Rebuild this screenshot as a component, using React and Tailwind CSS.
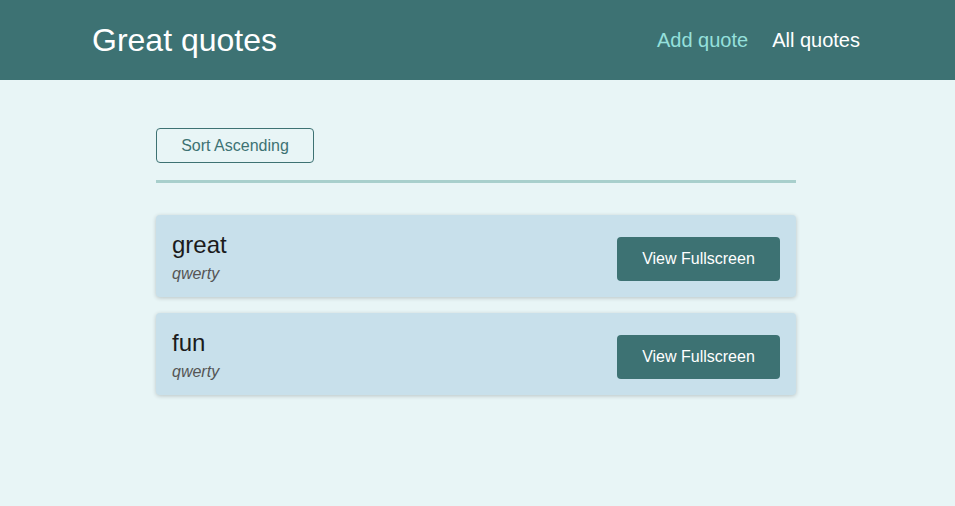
const quotes = [
  { id: 'q1', text: 'great', author: 'qwerty' },
  { id: 'q2', text: 'fun', author: 'qwerty' },
]

export default function App() {
  return (
    <div className="min-h-screen bg-[#e8f5f6] font-['Liberation_Sans',Arial,sans-serif]">
      <header className="flex h-20 items-center justify-between bg-[#3d7273] pl-[92px] pr-[95px]">
        <div className="text-[32px] text-white">Great quotes</div>
        <nav className="flex items-center gap-6 text-[20px]">
          <a className="text-[#95e0dc]">Add quote</a>
          <a className="text-white">All quotes</a>
        </nav>
      </header>

      <main className="ml-[156px] mt-12 w-[640px]">
        <div className="border-b-[3px] border-[#a8cfcc] pb-[17px]">
          <button className="h-[35px] w-[158px] rounded-[4px] border border-[#3d7273] text-[16px] text-[#3d7273]">
            Sort Ascending
          </button>
        </div>

        <ul className="mt-8 flex flex-col gap-4">
          {quotes.map((quote) => (
            <QuoteItem key={quote.id} quote={quote} />
          ))}
        </ul>
      </main>
    </div>
  )
}

function QuoteItem({ quote }) {
  return (
    <li className="flex h-[82px] items-center justify-between rounded-[4px] bg-[#c8e0eb] px-4 shadow-[0_1px_4px_rgba(0,0,0,0.2)]">
      <figure className="mt-[3px]">
        <blockquote className="text-[24px] leading-[30px] text-[#1b1b1b]">{quote.text}</blockquote>
        <figcaption className="mt-[2px] text-[16px] italic text-[#555]">{quote.author}</figcaption>
      </figure>
      <button className="mt-[6px] h-[44px] w-[163px] rounded-[4px] bg-[#3d7273] text-[16px] text-white">
        View Fullscreen
      </button>
    </li>
  )
}
